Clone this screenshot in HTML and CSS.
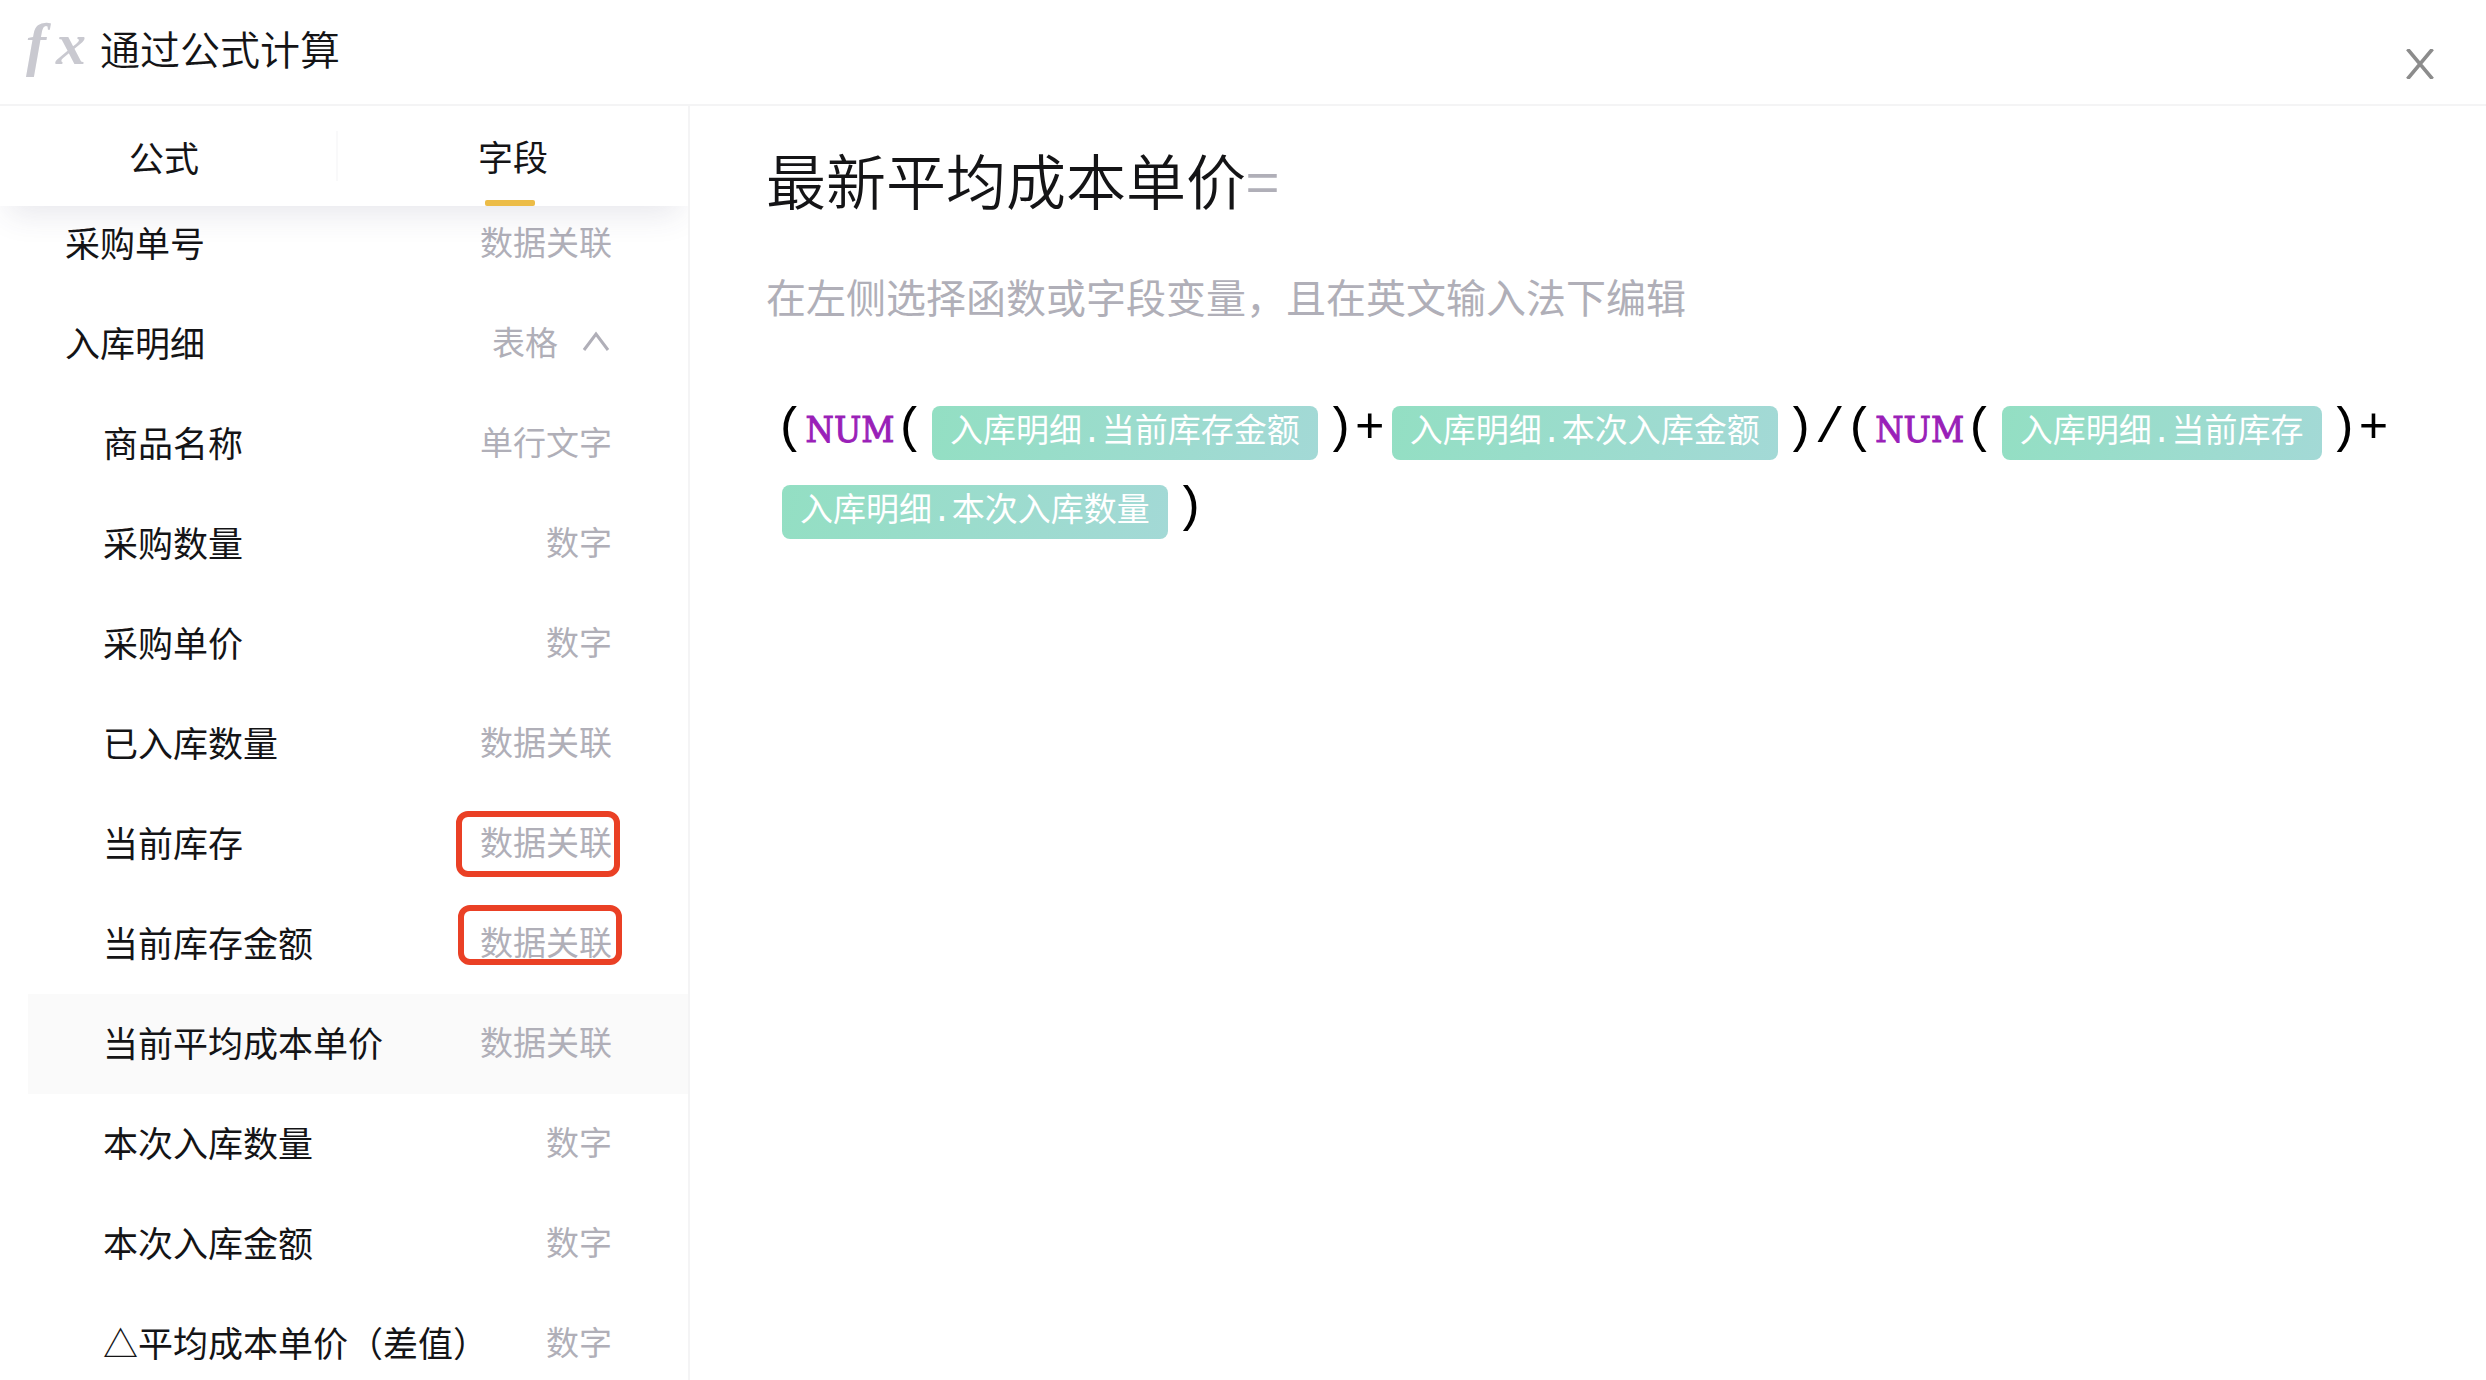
FILE: index.html
```html
<!DOCTYPE html>
<html lang="zh-CN">
<head>
  <meta charset="UTF-8" />
  <meta name="viewport" content="width=device-width, initial-scale=1.0" />
  <title>通过公式计算</title>
  <link rel="stylesheet" href="styles.css">
</head>
<body>
  <header class="header">
    <div class="fx" aria-hidden="true"><span>f</span><span>x</span></div>
    <h1>通过公式计算</h1>
    <button class="close" type="button" aria-label="关闭">
      <svg width="28" height="30" viewBox="0 0 28 30"><path d="M1.5 0L26.5 30M26.5 0L1.5 30" stroke="#8c8c8c" stroke-width="3.6" fill="none"/></svg>
    </button>
  </header>

  <div class="body">
    <aside class="sidebar">
      <div class="tabs">
        <button class="tab tab-formula" type="button">公式</button>
        <button class="tab tab-field active" type="button">字段</button>
      </div>

      <ul class="fields">
        <li class="field"><span>采购单号</span><span class="type">数据关联</span></li>
        <li class="field"><span>入库明细</span>
          <span class="type">表格
            <svg class="arrow" width="30" height="20" viewBox="0 0 30 20"><path d="M2 19L14 3L26 19" stroke="#b0afb8" stroke-width="3" fill="none"/></svg>
          </span>
        </li>
        <li class="field child"><span>商品名称</span><span class="type">单行文字</span></li>
        <li class="field child"><span>采购数量</span><span class="type">数字</span></li>
        <li class="field child"><span>采购单价</span><span class="type">数字</span></li>
        <li class="field child"><span>已入库数量</span><span class="type">数据关联</span></li>
        <li class="field child"><span>当前库存</span><span class="type">数据关联</span><i class="mark mark-stock"></i></li>
        <li class="field child"><span>当前库存金额</span><span class="type">数据关联</span><i class="mark mark-amount"></i></li>
        <li class="field child hover"><span>当前平均成本单价</span><span class="type">数据关联</span></li>
        <li class="field child"><span>本次入库数量</span><span class="type">数字</span></li>
        <li class="field child"><span>本次入库金额</span><span class="type">数字</span></li>
        <li class="field child"><span>△平均成本单价（差值）</span><span class="type">数字</span></li>
      </ul>
    </aside>

    <main class="editor">
      <h2>最新平均成本单价<span class="equal">=</span></h2>
      <p class="hint">在左侧选择函数或字段变量，且在英文输入法下编辑</p>
      <div class="formula">(<span class="func">NUM</span>(<span class="tag">入库明细.当前库存金额</span>)+<span class="tag">入库明细.本次入库金额</span>)/(<span class="func">NUM</span>(<span class="tag">入库明细.当前库存</span>)+<span class="tag">入库明细.本次入库数量</span>)</div>
    </main>
  </div>
</body>
</html>
```
FILE: styles.css
```css
* {
  box-sizing: border-box;
}
body {
  margin: 0;
  height: 100vh;
  display: flex;
  flex-direction: column;
  overflow: hidden;
  background: #fff;
  color: #141416;
  font-family: "Noto Sans CJK SC", sans-serif;
}
h1, h2, p, ul {
  margin: 0;
  padding: 0;
}
button {
  border: none;
  background: none;
  padding: 0;
  color: inherit;
  font-family: inherit;
  cursor: pointer;
}

/* header */
.header {
  display: flex;
  align-items: center;
  height: 106px;
  padding: 0 52px 8px 26px;
  border-bottom: 2px solid #f4f4f5;
  flex-shrink: 0;
}
.fx {
  display: flex;
  gap: 10px;
  width: 74px;
  padding-bottom: 8px;
  font: italic bold 60px/60px "Liberation Serif", serif;
  color: #c9c9d0;
}
h1 {
  font-size: 40px;
  font-weight: 350;
  line-height: 60px;
}
.close {
  margin-left: auto;
  padding-top: 32px;
}
.close svg, .arrow {
  display: block;
}

.body {
  display: flex;
  flex: 1;
  min-height: 0;
}

/* left column */
.sidebar {
  width: 690px;
  flex-shrink: 0;
  border-right: 2px solid #f4f4f5;
  overflow: hidden;
}
.tabs {
  position: relative;
  z-index: 1;
  display: flex;
  align-items: center;
  height: 100px;
  background: #fff;
  box-shadow: 0 16px 32px -8px rgba(60, 60, 100, 0.12);
}
.tab {
  position: relative;
  flex: 1;
  height: 100px;
  padding-bottom: 2px;
  font-size: 35px;
}
.tab-formula {
  flex: 0 0 338px;
  height: 50px;
  padding-right: 8px;
  border-right: 2px solid #f9f9fa;
}
.tab.active::after {
  content: "";
  position: absolute;
  left: calc(50% - 28px);
  bottom: 0;
  width: 50px;
  height: 6px;
  border-radius: 2px;
  background: #ecbc47;
}

.fields {
  list-style: none;
  margin-top: -12px;
  padding-left: 28px;
}
.field {
  position: relative;
  display: flex;
  align-items: center;
  justify-content: space-between;
  height: 100px;
  padding: 0 76px 6px 37px;
  font-size: 35px;
}
.child {
  padding-left: 75px;
}
.hover {
  background: #fafafa;
}
.type {
  display: flex;
  align-items: center;
  gap: 24px;
  color: #b0afb8;
  font-size: 33px;
}

/* red frames round the linked types */
.mark {
  position: absolute;
  width: 164px;
  border: 6px solid #ea4025;
  border-radius: 12px;
}
.mark-stock {
  top: 17px;
  right: 68px;
  height: 66px;
}
.mark-amount {
  top: 11px;
  right: 66px;
  height: 60px;
}

/* right column */
.editor {
  flex: 1;
  padding: 28px 76px;
}
h2 {
  font-size: 60px;
  font-weight: 350;
  line-height: 90px;
}
.equal {
  color: #b0afb8;
}
.hint {
  margin-top: 42px;
  color: #b0afb8;
  font-size: 40px;
  line-height: 60px;
}
.formula {
  margin: 64px 0 0 9px;
  color: #000;
  font-family: "Liberation Mono", monospace;
  font-size: 50px;
  line-height: 78px;
}
.func {
  display: inline-block;
  width: 90px;
  color: #9a1fb8;
  font-family: "DejaVu Serif Condensed", "DejaVu Serif", serif;
  font-size: 36px;
  text-align: center;
  -webkit-text-stroke: 1px #9a1fb8;
}
.tag {
  display: inline-block;
  margin: 0 7px;
  padding: 6px 18px 4px;
  border-radius: 8px;
  background: linear-gradient(105deg, #93dfc3, #a3d9d6);
  color: #fff;
  font-family: "Liberation Mono", "Noto Sans CJK SC", monospace;
  font-size: 33px;
  line-height: 44px;
}
```
